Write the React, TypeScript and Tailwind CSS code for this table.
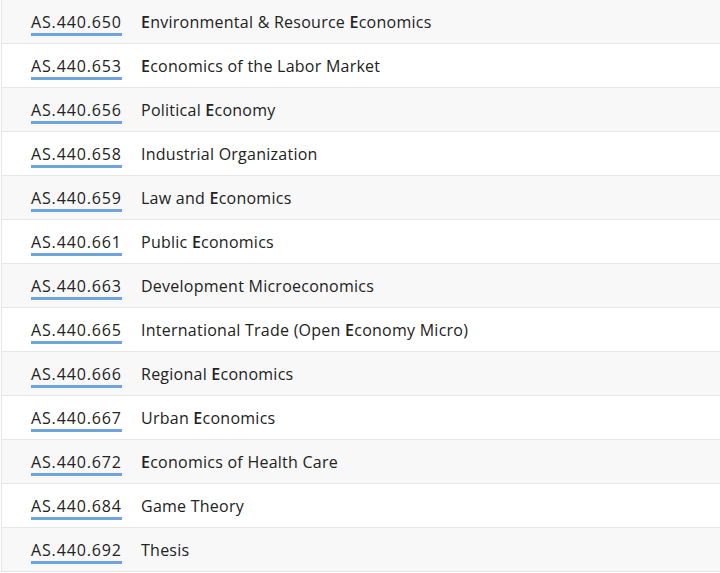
import React from "react";

const rows: [string, string][] = [
  ["AS.440.650", "Environmental & Resource Economics"],
  ["AS.440.653", "Economics of the Labor Market"],
  ["AS.440.656", "Political Economy"],
  ["AS.440.658", "Industrial Organization"],
  ["AS.440.659", "Law and Economics"],
  ["AS.440.661", "Public Economics"],
  ["AS.440.663", "Development Microeconomics"],
  ["AS.440.665", "International Trade (Open Economy Micro)"],
  ["AS.440.666", "Regional Economics"],
  ["AS.440.667", "Urban Economics"],
  ["AS.440.672", "Economics of Health Care"],
  ["AS.440.684", "Game Theory"],
  ["AS.440.692", "Thesis"],
];

function Title({ text }: { text: string }) {
  const parts = text.split(/(E)/);
  return (
    <>
      {parts.map((p, i) =>
        p === "E" ? (
          <span key={i} className="font-semibold">
            E
          </span>
        ) : (
          <React.Fragment key={i}>{p}</React.Fragment>
        )
      )}
    </>
  );
}

export default function App() {
  return (
    <div
      className="w-[720px] h-[573px] overflow-hidden bg-white pl-px"
      style={{ fontFamily: "'Open Sans', 'Noto Sans', sans-serif" }}
    >
      <div className="border-l border-[#e5e5e5]">
        {rows.map(([code, title], i) => (
          <div
            key={code}
            className={`flex items-center h-[44px] border-b border-[#e6e6e6] pl-[29px] text-[16px] leading-[24px] text-[#222222] ${
              i % 2 === 0 ? "bg-[#f8f8f8]" : "bg-white"
            }`}
          >
            <div className="w-[110px] shrink-0">
              <span className="border-b-[3px] border-[#6fa3db] tracking-[0.85px]">
                {code}
              </span>
            </div>
            <div className="tracking-[0.25px]">
              <Title text={title} />
            </div>
          </div>
        ))}
      </div>
    </div>
  );
}
